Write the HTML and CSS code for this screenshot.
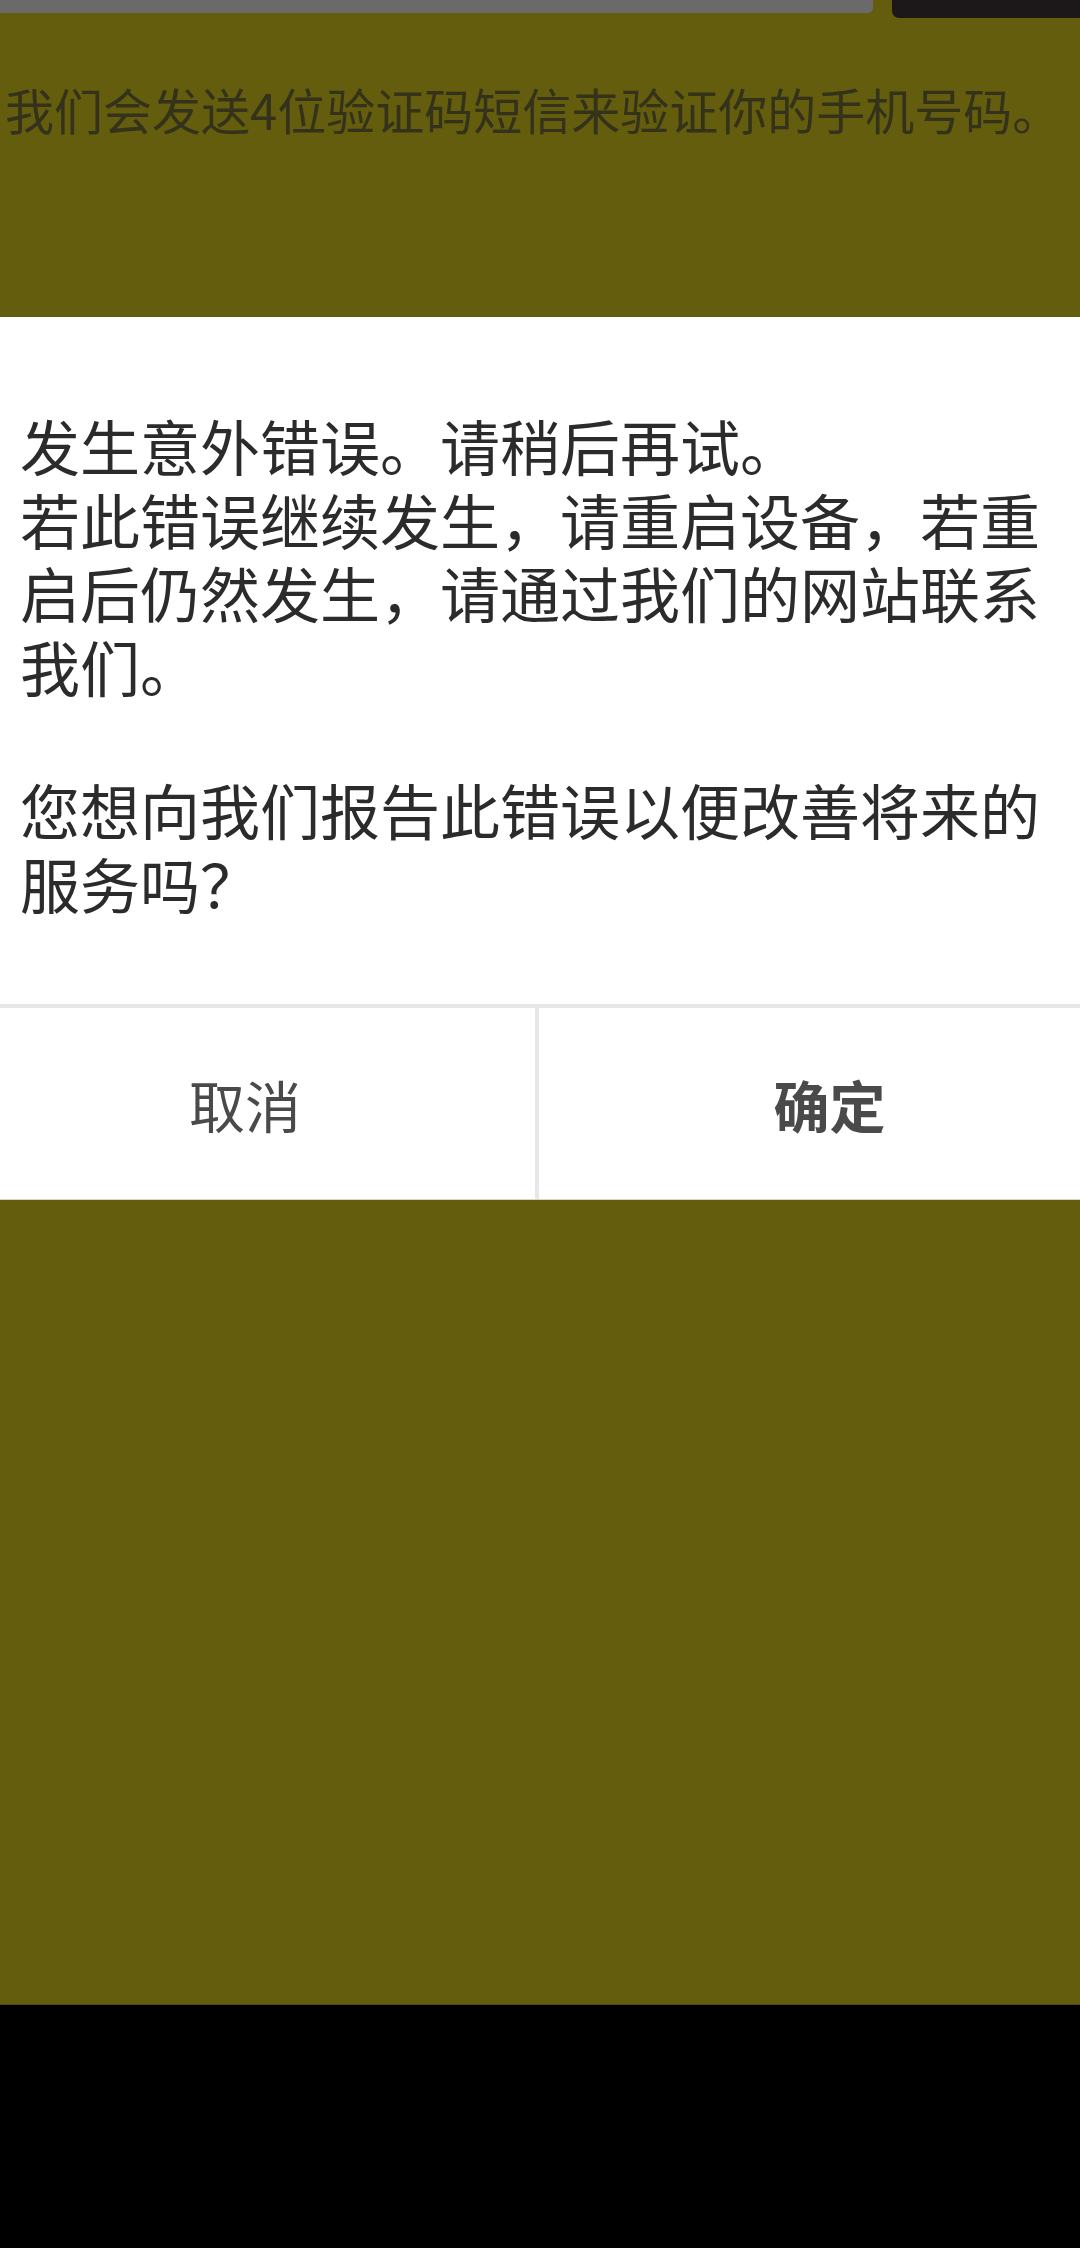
FILE: index.html
```html
<!DOCTYPE html>
<html lang="zh-CN">
<head>
    <meta charset="UTF-8">
    <meta name="viewport" content="width=device-width, initial-scale=1.0">
    <title>验证手机号码</title>
    <link rel="stylesheet" href="styles.css">
</head>
<body>
    <div class="screen">
        <!-- Dimmed page behind the dialog -->
        <div class="backdrop-top">
            <div class="topbar">
                <div class="input-edge"></div>
                <div class="button-edge"></div>
            </div>
            <p class="hint">我们会发送4位验证码短信来验证你的手机号码。</p>
        </div>

        <!-- Error dialog -->
        <div class="dialog">
            <div class="dialog-body">
                <p>发生意外错误。请稍后再试。<br>若此错误继续发生，请重启设备，若重启后仍然发生，请通过我们的网站联系我们。</p>
                <p class="question">您想向我们报告此错误以便改善将来的服务吗？</p>
            </div>
            <div class="dialog-actions">
                <button class="btn btn-cancel">取消</button>
                <button class="btn btn-ok">确定</button>
            </div>
        </div>

        <div class="backdrop-bottom"></div>
        <div class="navbar"></div>
    </div>
</body>
</html>
```

FILE: styles.css
```css
body {
    margin: 0;
    padding: 0;
    font-family: "Noto Sans CJK SC", "Noto Sans", sans-serif;
    background-color: #000;
}
.screen {
    width: 1080px;
    height: 2248px;
    display: flex;
    flex-direction: column;
    overflow: hidden;
}
.backdrop-top {
    height: 317px;
    background-color: #635d0d;
    flex-shrink: 0;
}
.topbar {
    display: flex;
    align-items: flex-start;
    gap: 19px;
}
.input-edge {
    width: 873px;
    height: 13px;
    background-color: #6a6a6a;
    border-bottom-right-radius: 5px;
}
.button-edge {
    flex: 1;
    height: 18px;
    background-color: #1c1718;
    border-bottom-left-radius: 7px;
}
.hint {
    margin: 61px 0 0 0;
    padding-left: 5px;
    font-size: 49px;
    line-height: 60px;
    color: #34321a;
    white-space: nowrap;
}
.dialog {
    background-color: #fff;
    flex-shrink: 0;
}
.dialog-body {
    padding: 91px 30px 85px 20px;
    font-size: 60px;
    line-height: 73.5px;
    color: #2b2b2b;
}
.dialog-body p {
    margin: 0;
}
.dialog-body .question {
    margin-top: 70px;
}
.dialog-actions {
    display: flex;
    border-top: 4px solid #e7e7e7;
    border-bottom: 1px solid #d8d6c8;
}
.btn {
    box-sizing: border-box;
    height: 191px;
    border: none;
    background-color: #fff;
    font-family: "Noto Sans CJK SC", "Noto Sans", sans-serif;
    font-size: 56px;
    color: #4a4a4a;
    padding: 0;
}
.btn-cancel {
    width: 539px;
    padding-right: 45px;
    border-right: 4px solid #e7e7e7;
}
.btn-ok {
    flex: 1;
    font-weight: bold;
    padding-left: 40px;
}
.backdrop-bottom {
    height: 804px;
    background-color: #635d0d;
    border-bottom: 1px solid #4f4a0a;
    flex-shrink: 0;
}
.navbar {
    flex: 1;
    background-color: #000;
}
```
